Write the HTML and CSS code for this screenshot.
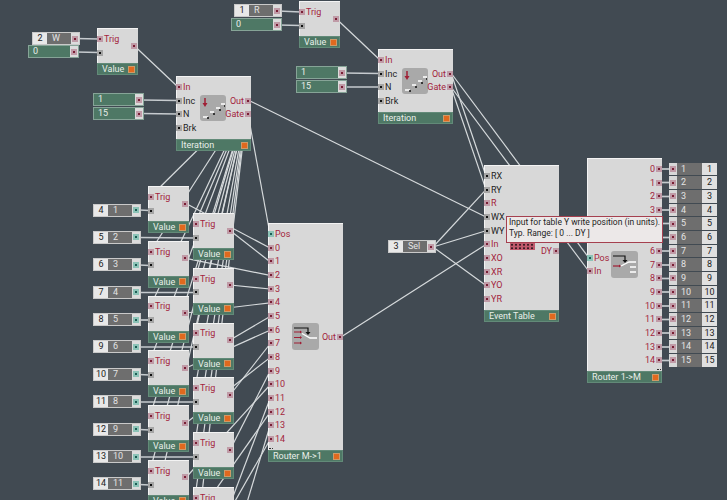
FILE: index.html
```html
<!DOCTYPE html>
<html lang="en">
<head>
	<meta charset="UTF-8">
	<title>Ensemble structure</title>
	<link rel="stylesheet" href="styles.css">
</head>
<body>
<div class="canvas">
	<svg class="wires" width="727" height="500">
		<g class="wires__thick">
			<line x1="76" y1="38.5" x2="99" y2="39"/>
			<line x1="76" y1="52" x2="99" y2="52.5"/>
			<line x1="278" y1="11" x2="301" y2="12"/>
			<line x1="278" y1="25" x2="301" y2="25.5"/>
			<line x1="141" y1="100" x2="178" y2="100.5"/>
			<line x1="141" y1="113.5" x2="178" y2="114"/>
			<line x1="343" y1="73" x2="380" y2="73.5"/>
			<line x1="343" y1="87" x2="380" y2="87"/>
			<line x1="139" y1="210" x2="150" y2="210.5"/>
			<line x1="139" y1="237.5" x2="195" y2="238"/>
			<line x1="139" y1="265" x2="150" y2="265.5"/>
			<line x1="139" y1="292.5" x2="195" y2="292.5"/>
			<line x1="139" y1="320" x2="150" y2="320"/>
			<line x1="139" y1="347" x2="195" y2="347"/>
			<line x1="139" y1="374.5" x2="150" y2="375"/>
			<line x1="139" y1="402" x2="195" y2="402"/>
			<line x1="139" y1="429.5" x2="150" y2="430"/>
			<line x1="139" y1="457" x2="195" y2="457"/>
			<line x1="139" y1="484.5" x2="150" y2="485"/>
			<line x1="660" y1="169" x2="672" y2="169"/>
			<line x1="660" y1="182.5" x2="672" y2="182.5"/>
			<line x1="660" y1="196.5" x2="672" y2="196.5"/>
			<line x1="660" y1="210" x2="672" y2="210"/>
			<line x1="660" y1="223.5" x2="672" y2="223.5"/>
			<line x1="660" y1="237.5" x2="672" y2="237.5"/>
			<line x1="660" y1="251" x2="672" y2="251"/>
			<line x1="660" y1="265" x2="672" y2="265"/>
			<line x1="660" y1="278.5" x2="672" y2="278.5"/>
			<line x1="660" y1="292" x2="672" y2="292"/>
			<line x1="660" y1="306" x2="672" y2="306"/>
			<line x1="660" y1="319.5" x2="672" y2="319.5"/>
			<line x1="660" y1="333" x2="672" y2="333"/>
			<line x1="660" y1="347" x2="672" y2="347"/>
			<line x1="660" y1="360.5" x2="672" y2="360.5"/>
		</g>
		<g class="wires__thin">
			<!-- value outs to iterations -->
			<line x1="134" y1="45.5" x2="178" y2="87"/>
			<line x1="336" y1="18.5" x2="380" y2="60"/>
			<!-- iteration out fan -->
			<line x1="248" y1="100" x2="150" y2="197"/>
			<line x1="248" y1="100" x2="150" y2="252"/>
			<line x1="248" y1="100" x2="150" y2="307"/>
			<line x1="248" y1="100" x2="150" y2="361"/>
			<line x1="248" y1="100" x2="150" y2="416"/>
			<line x1="248" y1="100" x2="150" y2="471"/>
			<line x1="248" y1="100" x2="150" y2="526"/>
			<line x1="248" y1="100" x2="195" y2="224"/>
			<line x1="248" y1="100" x2="195" y2="279"/>
			<line x1="248" y1="100" x2="195" y2="334"/>
			<line x1="248" y1="100" x2="195" y2="388"/>
			<line x1="248" y1="100" x2="195" y2="443"/>
			<line x1="248" y1="100" x2="195" y2="498"/>
			<line x1="248" y1="100" x2="195" y2="553"/>
			<line x1="248" y1="100" x2="486" y2="217"/>
			<line x1="248" y1="114" x2="270" y2="234"/>
			<!-- values to router -->
			<line x1="186" y1="203.5" x2="270" y2="248"/>
			<line x1="230" y1="230.5" x2="270" y2="261.7"/>
			<line x1="186" y1="258.3" x2="270" y2="275.4"/>
			<line x1="230" y1="285" x2="270" y2="289"/>
			<line x1="186" y1="313" x2="270" y2="302.8"/>
			<line x1="230" y1="340" x2="270" y2="316.5"/>
			<line x1="186" y1="368" x2="270" y2="330.2"/>
			<line x1="230" y1="395" x2="270" y2="344"/>
			<line x1="186" y1="423" x2="270" y2="357.6"/>
			<line x1="230" y1="450" x2="270" y2="371.3"/>
			<line x1="186" y1="477.5" x2="270" y2="385"/>
			<line x1="230" y1="504.5" x2="270" y2="398.7"/>
			<line x1="186" y1="532" x2="270" y2="412.4"/>
			<line x1="230" y1="559" x2="270" y2="426"/>
			<line x1="186" y1="587" x2="270" y2="439.8"/>
			<!-- right hand side -->
			<line x1="341" y1="337" x2="486" y2="244.4"/>
			<line x1="433" y1="247" x2="486" y2="189.6"/>
			<line x1="433" y1="247" x2="486" y2="230.7"/>
			<line x1="433" y1="247" x2="486" y2="285.5"/>
			<line x1="451" y1="73" x2="486" y2="176"/>
			<line x1="451" y1="87" x2="486" y2="189.6"/>
			<line x1="451" y1="73" x2="589" y2="258"/>
			<line x1="451" y1="87" x2="589" y2="271.5"/>
		</g>
	</svg>

	<!-- top left -->
	<div class="knob knob--w placed"><span class="knob__num">2</span><span class="knob__name">W</span><span class="knob__end"><i class="port"></i></span></div>
	<div class="field field--w0 placed"><span class="field__val">0</span><span class="knob__end"><i class="port"></i></span></div>
	<div class="node node--value placed value-w">
		<div class="node__body">
			<div class="ports ports--left">
				<div class="row row--red"><i class="port"></i>Trig</div>
				<div class="row"><i class="port port--dark"></i></div>
			</div>
			<i class="port port--out"></i>
		</div>
		<div class="node__foot">Value<b class="led"></b></div>
	</div>

	<div class="knob knob--r placed"><span class="knob__num">1</span><span class="knob__name">R</span><span class="knob__end"><i class="port"></i></span></div>
	<div class="field field--r0 placed"><span class="field__val">0</span><span class="knob__end"><i class="port"></i></span></div>
	<div class="node node--value placed value-r">
		<div class="node__body">
			<div class="ports ports--left">
				<div class="row row--red"><i class="port"></i>Trig</div>
				<div class="row"><i class="port port--dark"></i></div>
			</div>
			<i class="port port--out"></i>
		</div>
		<div class="node__foot">Value<b class="led"></b></div>
	</div>

	<!-- iteration 1 -->
	<div class="field field--a1 placed"><span class="field__val">1</span><span class="knob__end"><i class="port"></i></span></div>
	<div class="field field--a2 placed"><span class="field__val">15</span><span class="knob__end"><i class="port"></i></span></div>
	<div class="node node--iter placed iter-a">
		<div class="node__body">
			<div class="ports ports--left">
				<div class="row row--red"><i class="port"></i>In</div>
				<div class="row"><i class="port port--dark"></i>Inc</div>
				<div class="row"><i class="port port--dark"></i>N</div>
				<div class="row"><i class="port port--dark"></i>Brk</div>
			</div>
			<svg class="icon icon--iter" width="26" height="26" viewBox="0 0 26 26">
				<rect width="26" height="26" rx="3" fill="#a9a9a9"/>
				<path d="M5 3v7" stroke="#a01f35" stroke-width="1.5"/>
				<path d="M2.5 8h5L5 12z" fill="#a01f35"/>
				<path d="M3 22h5M10 17h4M16 13h4M21 9h4" stroke="#fff" stroke-width="1.3"/>
				<path d="M7 23h2M13 19h2M19 15h2M24 11h1" stroke="#111" stroke-width="1.3"/>
			</svg>
			<div class="ports ports--right">
				<div class="row"></div>
				<div class="row row--red">Out<i class="port"></i></div>
				<div class="row row--red">Gate<i class="port"></i></div>
			</div>
		</div>
		<div class="node__foot">Iteration<b class="led"></b></div>
	</div>

	<!-- iteration 2 -->
	<div class="field field--b1 placed"><span class="field__val">1</span><span class="knob__end"><i class="port"></i></span></div>
	<div class="field field--b2 placed"><span class="field__val">15</span><span class="knob__end"><i class="port"></i></span></div>
	<div class="node node--iter placed iter-b">
		<div class="node__body">
			<div class="ports ports--left">
				<div class="row row--red"><i class="port"></i>In</div>
				<div class="row"><i class="port port--dark"></i>Inc</div>
				<div class="row"><i class="port port--dark"></i>N</div>
				<div class="row"><i class="port port--dark"></i>Brk</div>
			</div>
			<svg class="icon icon--iter" width="26" height="26" viewBox="0 0 26 26">
				<rect width="26" height="26" rx="3" fill="#a9a9a9"/>
				<path d="M5 3v7" stroke="#a01f35" stroke-width="1.5"/>
				<path d="M2.5 8h5L5 12z" fill="#a01f35"/>
				<path d="M3 22h5M10 17h4M16 13h4M21 9h4" stroke="#fff" stroke-width="1.3"/>
				<path d="M7 23h2M13 19h2M19 15h2M24 11h1" stroke="#111" stroke-width="1.3"/>
			</svg>
			<div class="ports ports--right">
				<div class="row"></div>
				<div class="row row--red">Out<i class="port"></i></div>
				<div class="row row--red">Gate<i class="port"></i></div>
			</div>
		</div>
		<div class="node__foot">Iteration<b class="led"></b></div>
	</div>

	<!-- knobs in front of the value columns -->
	<div class="knobs placed">
		<div class="knob"><span class="knob__num">4</span><span class="knob__name">1</span><span class="knob__end"><i class="port port--teal"></i></span></div>
		<div class="knob"><span class="knob__num">5</span><span class="knob__name">2</span><span class="knob__end"><i class="port port--teal"></i></span></div>
		<div class="knob"><span class="knob__num">6</span><span class="knob__name">3</span><span class="knob__end"><i class="port port--teal"></i></span></div>
		<div class="knob"><span class="knob__num">7</span><span class="knob__name">4</span><span class="knob__end"><i class="port port--teal"></i></span></div>
		<div class="knob"><span class="knob__num">8</span><span class="knob__name">5</span><span class="knob__end"><i class="port port--teal"></i></span></div>
		<div class="knob"><span class="knob__num">9</span><span class="knob__name">6</span><span class="knob__end"><i class="port port--teal"></i></span></div>
		<div class="knob"><span class="knob__num">10</span><span class="knob__name">7</span><span class="knob__end"><i class="port port--teal"></i></span></div>
		<div class="knob"><span class="knob__num">11</span><span class="knob__name">8</span><span class="knob__end"><i class="port port--teal"></i></span></div>
		<div class="knob"><span class="knob__num">12</span><span class="knob__name">9</span><span class="knob__end"><i class="port port--teal"></i></span></div>
		<div class="knob"><span class="knob__num">13</span><span class="knob__name">10</span><span class="knob__end"><i class="port port--teal"></i></span></div>
		<div class="knob"><span class="knob__num">14</span><span class="knob__name">11</span><span class="knob__end"><i class="port port--teal"></i></span></div>
	</div>

	<div class="stack stack--a placed">
		<div class="node node--value"><div class="node__body"><div class="ports ports--left"><div class="row row--red"><i class="port"></i>Trig</div><div class="row"><i class="port port--dark"></i></div></div><i class="port port--out"></i></div><div class="node__foot">Value<b class="led"></b></div></div>
		<div class="node node--value"><div class="node__body"><div class="ports ports--left"><div class="row row--red"><i class="port"></i>Trig</div><div class="row"><i class="port port--dark"></i></div></div><i class="port port--out"></i></div><div class="node__foot">Value<b class="led"></b></div></div>
		<div class="node node--value"><div class="node__body"><div class="ports ports--left"><div class="row row--red"><i class="port"></i>Trig</div><div class="row"><i class="port port--dark"></i></div></div><i class="port port--out"></i></div><div class="node__foot">Value<b class="led"></b></div></div>
		<div class="node node--value"><div class="node__body"><div class="ports ports--left"><div class="row row--red"><i class="port"></i>Trig</div><div class="row"><i class="port port--dark"></i></div></div><i class="port port--out"></i></div><div class="node__foot">Value<b class="led"></b></div></div>
		<div class="node node--value"><div class="node__body"><div class="ports ports--left"><div class="row row--red"><i class="port"></i>Trig</div><div class="row"><i class="port port--dark"></i></div></div><i class="port port--out"></i></div><div class="node__foot">Value<b class="led"></b></div></div>
		<div class="node node--value"><div class="node__body"><div class="ports ports--left"><div class="row row--red"><i class="port"></i>Trig</div><div class="row"><i class="port port--dark"></i></div></div><i class="port port--out"></i></div><div class="node__foot">Value<b class="led"></b></div></div>
	</div>
	<div class="stack stack--b placed">
		<div class="node node--value"><div class="node__body"><div class="ports ports--left"><div class="row row--red"><i class="port"></i>Trig</div><div class="row"><i class="port port--dark"></i></div></div><i class="port port--out"></i></div><div class="node__foot">Value<b class="led"></b></div></div>
		<div class="node node--value"><div class="node__body"><div class="ports ports--left"><div class="row row--red"><i class="port"></i>Trig</div><div class="row"><i class="port port--dark"></i></div></div><i class="port port--out"></i></div><div class="node__foot">Value<b class="led"></b></div></div>
		<div class="node node--value"><div class="node__body"><div class="ports ports--left"><div class="row row--red"><i class="port"></i>Trig</div><div class="row"><i class="port port--dark"></i></div></div><i class="port port--out"></i></div><div class="node__foot">Value<b class="led"></b></div></div>
		<div class="node node--value"><div class="node__body"><div class="ports ports--left"><div class="row row--red"><i class="port"></i>Trig</div><div class="row"><i class="port port--dark"></i></div></div><i class="port port--out"></i></div><div class="node__foot">Value<b class="led"></b></div></div>
		<div class="node node--value"><div class="node__body"><div class="ports ports--left"><div class="row row--red"><i class="port"></i>Trig</div><div class="row"><i class="port port--dark"></i></div></div><i class="port port--out"></i></div><div class="node__foot">Value<b class="led"></b></div></div>
		<div class="node node--value"><div class="node__body"><div class="ports ports--left"><div class="row row--red"><i class="port"></i>Trig</div><div class="row"><i class="port port--dark"></i></div></div><i class="port port--out"></i></div><div class="node__foot">Value<b class="led"></b></div></div>
	</div>

	<!-- router M->1 -->
	<div class="node node--router placed router-in">
		<div class="node__body node__body--center">
			<div class="ports ports--left">
				<div class="row row--red"><i class="port port--teal"></i>Pos</div>
				<div class="row row--red"><i class="port"></i>0</div>
				<div class="row row--red"><i class="port"></i>1</div>
				<div class="row row--red"><i class="port"></i>2</div>
				<div class="row row--red"><i class="port"></i>3</div>
				<div class="row row--red"><i class="port"></i>4</div>
				<div class="row row--red"><i class="port"></i>5</div>
				<div class="row row--red"><i class="port"></i>6</div>
				<div class="row row--red"><i class="port"></i>7</div>
				<div class="row row--red"><i class="port"></i>8</div>
				<div class="row row--red"><i class="port"></i>9</div>
				<div class="row row--red"><i class="port"></i>10</div>
				<div class="row row--red"><i class="port"></i>11</div>
				<div class="row row--red"><i class="port"></i>12</div>
				<div class="row row--red"><i class="port"></i>13</div>
				<div class="row row--red"><i class="port"></i>14</div>
				<div class="more more--left"></div>
			</div>
			<svg class="icon icon--router" width="27" height="27" viewBox="0 0 27 27">
				<rect width="27" height="27" rx="3" fill="#a9a9a9"/>
				<path d="M2 5h14v5" fill="none" stroke="#111" stroke-width="1.2"/>
				<path d="M13.5 9h5L16 12z" fill="#111"/>
				<path d="M2 9h7M2 14.5h7M2 20h7" stroke="#a01f35" stroke-width="1.2"/>
				<path d="M8 7.5l2 1.5-2 1.5zM8 13l2 1.500-2 1.500zM8 18.500l2 1.500-2 1.500z" fill="#a01f35"/>
				<path d="M10 10.500l8 4.500h7" fill="none" stroke="#fff" stroke-width="1.4"/>
			</svg>
			<div class="ports ports--right ports--grow">
				<div class="row row--red">Out<i class="port"></i></div>
			</div>
		</div>
		<div class="node__foot">Router M-&gt;1<b class="led"></b></div>
	</div>

	<!-- sel and event table -->
	<div class="knob knob--sel placed"><span class="knob__num">3</span><span class="knob__name">Sel</span><span class="knob__end"><i class="port"></i></span></div>
	<div class="node node--router placed event-table">
		<div class="node__body">
			<div class="ports ports--left ports--event">
				<div class="row"><i class="port port--dark"></i>RX</div>
				<div class="row"><i class="port port--dark"></i>RY</div>
				<div class="row row--red"><i class="port"></i>R</div>
				<div class="row"><i class="port port--dark"></i>WX</div>
				<div class="row"><i class="port port--dark"></i>WY</div>
				<div class="row row--red"><i class="port"></i>In</div>
				<div class="row row--red"><i class="port"></i>XO</div>
				<div class="row row--red"><i class="port"></i>XR</div>
				<div class="row row--red"><i class="port"></i>YO</div>
				<div class="row row--red"><i class="port"></i>YR</div>
			</div>
			<div class="dots"></div>
			<div class="ports ports--right ports--grow ports--dy">
				<div class="row row--red">DY<i class="port"></i></div>
			</div>
		</div>
		<div class="node__foot">Event Table<b class="led"></b></div>
	</div>

	<!-- router 1->M, rows 4 and 5 sit under the tooltip -->
	<div class="node node--router placed router-out">
		<div class="node__body node__body--center">
			<div class="ports ports--left">
				<div class="row row--red"><i class="port port--teal"></i>Pos</div>
				<div class="row row--red"><i class="port"></i>In</div>
			</div>
			<svg class="icon icon--router" width="27" height="27" viewBox="0 0 27 27">
				<rect width="27" height="27" rx="3" fill="#a9a9a9"/>
				<path d="M2 5h12v5" fill="none" stroke="#111" stroke-width="1.2"/>
				<path d="M11.500 9h5L14 12z" fill="#111"/>
				<path d="M2 15h7" stroke="#a01f35" stroke-width="1.2"/>
				<path d="M8 13.500l2 1.500-2 1.500z" fill="#a01f35"/>
				<path d="M10 15l8-4h7M19 16h6M19 21h6" fill="none" stroke="#fff" stroke-width="1.3"/>
			</svg>
			<div class="ports ports--right ports--grow">
				<div class="row row--red">0<i class="port"></i></div>
				<div class="row row--red">1<i class="port"></i></div>
				<div class="row row--red">2<i class="port"></i></div>
				<div class="row row--red">3<i class="port"></i></div>
				<div class="row row--red"></div>
				<div class="row row--red"></div>
				<div class="row row--red">6<i class="port"></i></div>
				<div class="row row--red">7<i class="port"></i></div>
				<div class="row row--red">8<i class="port"></i></div>
				<div class="row row--red">9<i class="port"></i></div>
				<div class="row row--red">10<i class="port"></i></div>
				<div class="row row--red">11<i class="port"></i></div>
				<div class="row row--red">12<i class="port"></i></div>
				<div class="row row--red">13<i class="port"></i></div>
				<div class="row row--red">14<i class="port"></i></div>
				<div class="more more--right"></div>
			</div>
		</div>
		<div class="node__foot">Router 1-&gt;M<b class="led"></b></div>
	</div>

	<div class="outs placed">
		<div class="out"><span class="out__end"><i class="port"></i></span><span class="out__name">1</span><span class="out__num">1</span></div>
		<div class="out"><span class="out__end"><i class="port"></i></span><span class="out__name">2</span><span class="out__num">2</span></div>
		<div class="out"><span class="out__end"><i class="port"></i></span><span class="out__name">3</span><span class="out__num">3</span></div>
		<div class="out"><span class="out__end"><i class="port"></i></span><span class="out__name">4</span><span class="out__num">4</span></div>
		<div class="out"><span class="out__end"><i class="port"></i></span><span class="out__name">5</span><span class="out__num">5</span></div>
		<div class="out"><span class="out__end"><i class="port"></i></span><span class="out__name">6</span><span class="out__num">6</span></div>
		<div class="out"><span class="out__end"><i class="port"></i></span><span class="out__name">7</span><span class="out__num">7</span></div>
		<div class="out"><span class="out__end"><i class="port"></i></span><span class="out__name">8</span><span class="out__num">8</span></div>
		<div class="out"><span class="out__end"><i class="port"></i></span><span class="out__name">9</span><span class="out__num">9</span></div>
		<div class="out"><span class="out__end"><i class="port"></i></span><span class="out__name">10</span><span class="out__num">10</span></div>
		<div class="out"><span class="out__end"><i class="port"></i></span><span class="out__name">11</span><span class="out__num">11</span></div>
		<div class="out"><span class="out__end"><i class="port"></i></span><span class="out__name">12</span><span class="out__num">12</span></div>
		<div class="out"><span class="out__end"><i class="port"></i></span><span class="out__name">13</span><span class="out__num">13</span></div>
		<div class="out"><span class="out__end"><i class="port"></i></span><span class="out__name">14</span><span class="out__num">14</span></div>
		<div class="out"><span class="out__end"><i class="port"></i></span><span class="out__name">15</span><span class="out__num">15</span></div>
	</div>

	<div class="tooltip placed">Input for table Y write position (in units).<br>Typ. Range: [ 0 ... DY ]</div>
</div>
</body>
</html>
```

FILE: styles.css
```css
body {
	margin: 0;
	background-color: #414a52;
	font-family: Roboto, "Liberation Sans", sans-serif;
	font-size: 9px;
}
.canvas {
	position: relative;
	width: 727px;
	height: 500px;
	overflow: hidden;
}
.placed {
	position: absolute;
}
.wires {
	position: absolute;
	left: 0;
	top: 0;
}
.wires__thick line {
	stroke: #c6cbcf;
	stroke-width: 1.7;
}
.wires__thin line {
	stroke: #d6dadc;
	stroke-width: 1.2;
}

/* modules */
.node {
	display: flex;
	flex-direction: column;
	flex: none;
	background-color: #d8d8d8;
	box-shadow: inset 1px 1px 0 #f3f3f3;
}
.node__body {
	display: flex;
	flex: 1;
	min-height: 0;
}
.node__body--center {
	align-items: center;
}
.node__foot {
	display: flex;
	justify-content: space-between;
	align-items: center;
	flex: none;
	box-sizing: border-box;
	height: 12px;
	padding: 0 2px 0 4px;
	background-color: #4e7865;
	border: 1px solid #628a78;
	color: #e9eee9;
	white-space: nowrap;
}
.node--value {
	width: 41px;
	height: 47px;
}
.node--value .node__body {
	align-items: center;
	justify-content: space-between;
}
.node--iter {
	width: 75px;
	height: 75px;
}
.node--router {
	width: 75px;
}
.led {
	width: 7px;
	height: 7px;
	background-color: #e0691e;
	border: 1px solid #cf9a68;
	box-sizing: border-box;
}

.value-w { left: 97px; top: 28px; }
.value-r { left: 299px; top: 1px; }
.iter-a { left: 176px; top: 76px; }
.iter-b { left: 378px; top: 49px; }
.router-in { left: 268px; top: 223px; height: 239px; }
.event-table { left: 484px; top: 165px; height: 157px; }
.router-out { left: 587px; top: 158px; height: 225px; }

/* rows of ports */
.ports {
	display: flex;
	flex-direction: column;
	flex: none;
	box-sizing: border-box;
}
.node__body > .ports {
	align-self: flex-start;
	padding-top: 4px;
}
.node__body--center > .ports--left,
.router-in .ports--right {
	align-self: center;
	padding-top: 0;
}
.router-in .ports--left {
	align-self: flex-start;
	padding-top: 4px;
	position: relative;
	height: 100%;
}
.router-out .ports--right {
	align-self: flex-start;
	padding-top: 4px;
	position: relative;
	height: 100%;
}
.ports--left {
	width: 24px;
}
.ports--event {
	width: 26px;
}
.ports--right {
	width: 25px;
}
.ports--grow {
	flex: 1;
}
.ports--dy {
	padding-top: 79px !important;
}
.row {
	display: flex;
	align-items: center;
	gap: 1px;
	height: 13.7px;
	color: #1e1e1e;
	white-space: nowrap;
}
.row--red {
	color: #a3243c;
}
.ports--right .row {
	justify-content: flex-end;
}
.port {
	display: block;
	flex: none;
	width: 6px;
	height: 6px;
	background-color: #7a1f35;
	box-shadow: inset 0 0 0 2px #c09ba7;
}
.port--dark {
	background-color: #111;
	box-shadow: inset 0 0 0 2px #a5a5a5;
}
.port--teal {
	background-color: #1d5e55;
	box-shadow: inset 0 0 0 2px #8cc3b7;
}
.port--out {
	margin-right: 1px;
}
.more {
	position: absolute;
	bottom: 1px;
	width: 4px;
	border-top: 1px dotted #333;
}
.more--left { left: 1px; }
.more--right { right: 1px; }

/* icons */
.icon {
	flex: none;
}
.icon--iter {
	margin-top: 19px;
}
.dots {
	flex: none;
	width: 25px;
	height: 7px;
	margin-top: 78px;
	background-color: #c0596c;
	background-image: radial-gradient(circle, #3a1c24 0 1px, transparent 1px);
	background-size: 4px 3.5px;
}

/* knobs and value fields */
.knob {
	display: flex;
	box-sizing: border-box;
	width: 48px;
	height: 13px;
	border: 1px solid #c9c9c9;
	line-height: 11px;
}
.knob__num {
	flex: none;
	width: 14px;
	background-color: #e8e8e8;
	color: #222;
	text-align: center;
}
.knob__name {
	flex: 1;
	padding-left: 5px;
	background-color: #6e6e6e;
	color: #e4e4e4;
}
.knob__end {
	display: flex;
	align-items: center;
	justify-content: center;
	flex: none;
	width: 8px;
	background-color: #dcdcdc;
}
.knob--w { left: 32px; top: 32px; }
.knob--r { left: 234px; top: 4px; }
.knob--sel { left: 388px; top: 240px; }
.knobs {
	display: flex;
	flex-direction: column;
	gap: 14.4px;
	left: 93px;
	top: 203.5px;
}
.field {
	display: flex;
	box-sizing: border-box;
	width: 51px;
	height: 13px;
	border: 1px solid #86a497;
	line-height: 11px;
}
.field__val {
	flex: 1;
	padding-left: 4px;
	background-color: #4e7865;
	color: #e9eee9;
}
.field--w0 { left: 28px; top: 45px; }
.field--r0 { left: 231px; top: 18px; }
.field--a1 { left: 93px; top: 93px; }
.field--a2 { left: 93px; top: 107px; }
.field--b1 { left: 296px; top: 66px; }
.field--b2 { left: 296px; top: 80px; }

.stack {
	display: flex;
	flex-direction: column;
	gap: 7.8px;
}
.stack--a { left: 148px; top: 186px; }
.stack--b { left: 193px; top: 213px; }

/* output labels */
.outs {
	display: flex;
	flex-direction: column;
	gap: 1px;
	left: 669px;
	top: 162.5px;
}
.out {
	display: flex;
	width: 48px;
	height: 12.7px;
	line-height: 12.7px;
}
.out__end {
	display: flex;
	align-items: center;
	justify-content: center;
	flex: none;
	width: 8px;
	background-color: #d8d8d8;
}
.out__name {
	flex: 1;
	padding-left: 4px;
	background-color: #6e6e6e;
	color: #e4e4e4;
}
.out__num {
	flex: none;
	width: 15px;
	background-color: #e0e0e0;
	color: #222;
	text-align: center;
}

.tooltip {
	left: 506px;
	top: 216px;
	box-sizing: border-box;
	width: 157px;
	height: 27px;
	padding: 0 2px;
	background-color: #ece8e8;
	border: 1px solid #a5404f;
	color: #1e1e1e;
	font-size: 8.5px;
	line-height: 10.5px;
	white-space: nowrap;
}
```
